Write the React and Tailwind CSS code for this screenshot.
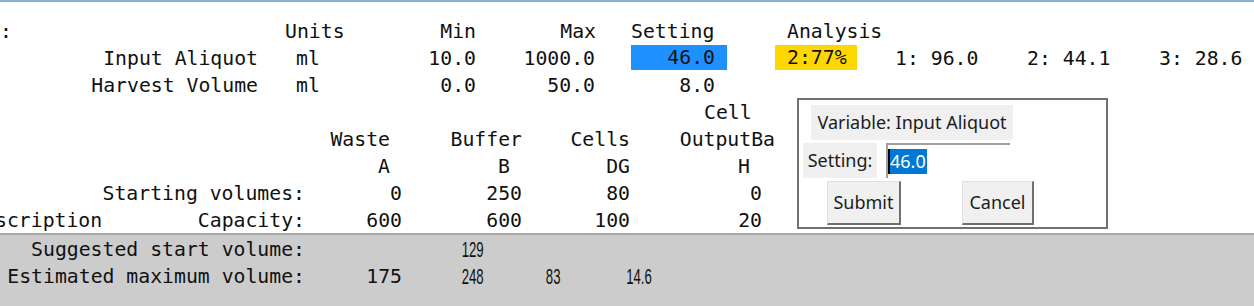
const mono = "font-['DejaVu_Sans_Mono',monospace] text-[19.8px] text-[#111]"
const row = 'flex h-[27px] leading-[27px] whitespace-pre'
const narrow = "inline-block origin-right scale-x-[0.6] font-['Liberation_Sans',sans-serif] text-[22px] text-[#111]"

const EditDialog = () => (
  <div className="absolute left-[797px] top-[98px] w-[311px] h-[131px] border-2 border-[#707070] bg-white font-['Noto_Sans',sans-serif] text-[18px] text-[#1c1c1c]">
    <div className="ml-[12px] mt-[5px] w-[202px] h-[35px] bg-[#f0f0f0] flex items-center justify-center whitespace-nowrap">
      Variable: Input Aliquot
    </div>
    <div className="flex mt-[3px]">
      <div className="ml-[4px] w-[74px] h-[35px] bg-[#f0f0f0] flex items-center justify-center">Setting:</div>
      <div className="ml-[9px] w-[124px] h-[35px] border-t-2 border-l-2 border-[#a0a0a0] flex items-center">
        <span className="w-[2px] h-[25px] bg-black" />
        <span className="h-[25px] leading-[25px] bg-[#0078d7] text-white pr-[1px]">46.0</span>
      </div>
    </div>
    <div className="flex mt-[3px]">
      <button className="ml-[28px] w-[74px] h-[44px] bg-[#f0f0f0] border-t border-l border-[#e0e0e0] border-r-2 border-b-2 border-r-[#6f6f6f] border-b-[#6f6f6f]">
        Submit
      </button>
      <button className="ml-[61px] w-[72px] h-[44px] bg-[#f0f0f0] border-t border-l border-[#e0e0e0] border-r-2 border-b-2 border-r-[#6f6f6f] border-b-[#6f6f6f]">
        Cancel
      </button>
    </div>
  </div>
)

export default function App() {
  return (
    <div className={`relative w-[1254px] h-[306px] overflow-hidden bg-white ${mono}`}>
      <div className="absolute left-0 top-0 w-full h-[2px] bg-[#8ab0d0]" />

      {/* Variables */}
      <div className="pt-[18px]">
        <div className={row}>
          <span className="w-[285px]">:</span>
          <span className="w-[100px]">Units</span>
          <span className="w-[91px] text-right">Min</span>
          <span className="w-[120px] text-right">Max</span>
          <span className="ml-[35px] w-[156px]">Setting</span>
          <span>Analysis</span>
        </div>
        <div className={row}>
          <span className="w-[258px] text-right">Input Aliquot</span>
          <span className="w-[118px] pl-[38px]">ml</span>
          <span className="w-[100px] text-right">10.0</span>
          <span className="w-[119px] text-right">1000.0</span>
          <span className="ml-[36px] w-[96px] h-[25px] leading-[25px] bg-[#1e90ff] text-right pr-[12px]">46.0</span>
          <span className="ml-[48px] w-[82px] h-[25px] leading-[25px] bg-[#ffd700] pl-[12px]">2:77%</span>
          <span className="ml-[38px] w-[132px]">1: 96.0</span>
          <span className="w-[132px]">2: 44.1</span>
          <span>3: 28.6</span>
        </div>
        <div className={row}>
          <span className="w-[258px] text-right">Harvest Volume</span>
          <span className="w-[118px] pl-[38px]">ml</span>
          <span className="w-[100px] text-right">0.0</span>
          <span className="w-[119px] text-right">50.0</span>
          <span className="w-[120px] text-right">8.0</span>
        </div>

        {/* Containers */}
        <div className={row}>
          <span className="ml-[704px]">Cell</span>
        </div>
        <div className={row}>
          <span className="w-[390px] text-right">Waste</span>
          <span className="w-[132px] text-right">Buffer</span>
          <span className="w-[108px] text-right">Cells</span>
          <span className="w-[145px] text-right">OutputBa</span>
        </div>
        <div className={row}>
          <span className="w-[390px] text-right">A</span>
          <span className="w-[120px] text-right">B</span>
          <span className="w-[120px] text-right">DG</span>
          <span className="w-[120px] text-right">H</span>
        </div>
        <div className={row}>
          <span className="w-[305px] text-right">Starting volumes:</span>
          <span className="w-[97px] text-right">0</span>
          <span className="w-[120px] text-right">250</span>
          <span className="w-[108px] text-right">80</span>
          <span className="w-[132px] text-right">0</span>
        </div>
        <div className="flex h-[26px] leading-[27px] whitespace-pre">
          <span className="w-[305px] flex justify-between">
            <span className="-ml-[5px]">scription</span>
            <span>Capacity:</span>
          </span>
          <span className="w-[97px] text-right">600</span>
          <span className="w-[120px] text-right">600</span>
          <span className="w-[108px] text-right">100</span>
          <span className="w-[132px] text-right">20</span>
        </div>
      </div>

      {/* Estimates */}
      <div className="h-[73px] bg-[#cccccc] border-t-2 border-[#a8a8a8] pt-[1px]">
        <div className={row}>
          <span className="w-[305px] text-right">Suggested start volume:</span>
          <span className="w-[179px] text-right">
            <span className={narrow}>129</span>
          </span>
        </div>
        <div className={row}>
          <span className="w-[305px] text-right">Estimated maximum volume:</span>
          <span className="w-[97px] text-right">175</span>
          <span className="w-[82px] text-right">
            <span className={narrow}>248</span>
          </span>
          <span className="w-[76px] text-right">
            <span className={narrow}>83</span>
          </span>
          <span className="w-[92px] text-right">
            <span className={narrow}>14.6</span>
          </span>
        </div>
      </div>

      <EditDialog />
    </div>
  )
}
